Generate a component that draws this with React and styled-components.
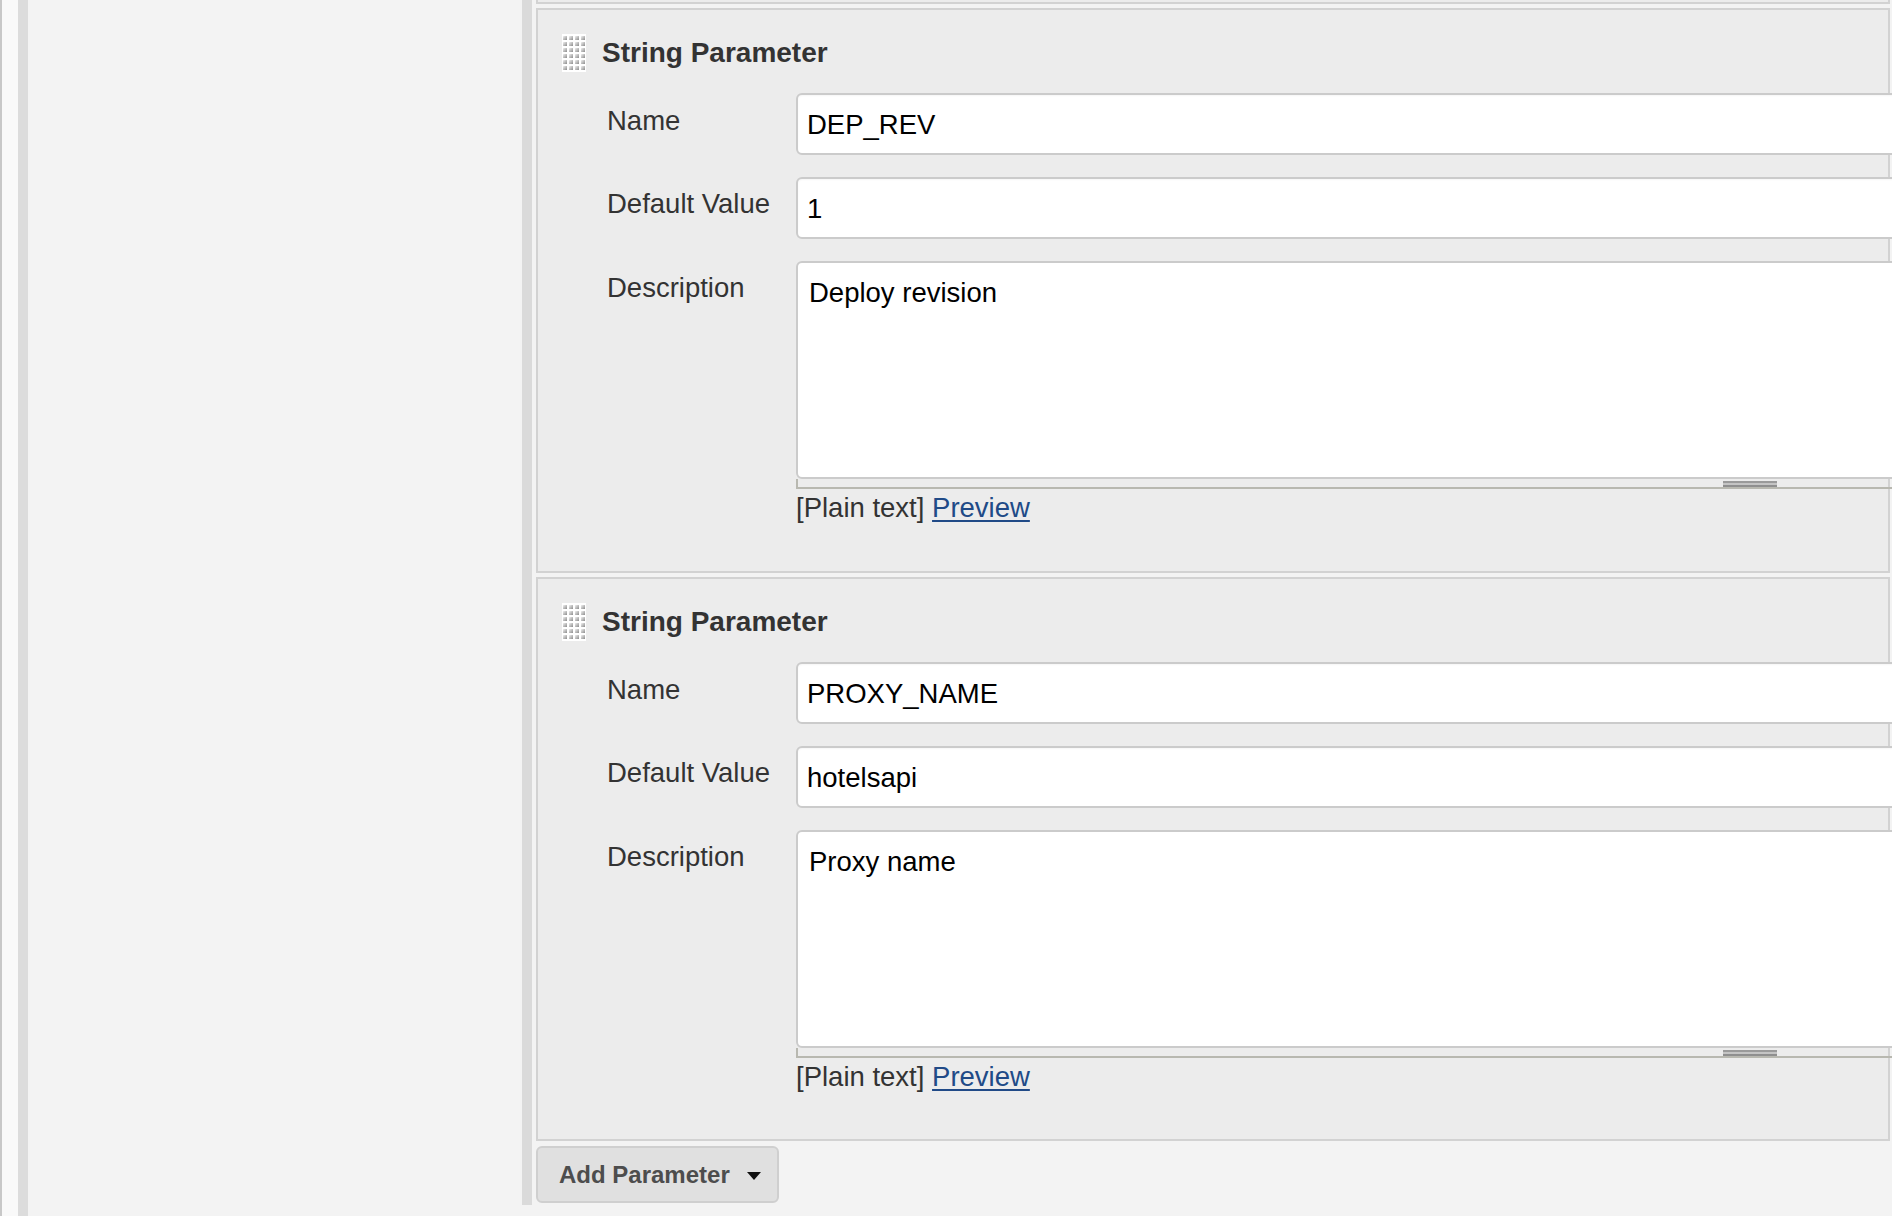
import React from 'react';
import styled, { createGlobalStyle } from 'styled-components';

const GlobalStyle = createGlobalStyle`
  html, body {
    margin: 0;
    padding: 0;
    overflow: hidden;
    background: #f3f3f3;
    font-family: "Liberation Sans", Arial, Helvetica, sans-serif;
  }
  * { box-sizing: border-box; }
`;

const Page = styled.div`
  display: flex;
  width: 1892px;
  height: 1216px;
  overflow: hidden;
`;

const SideStripe = styled.div`
  flex: 0 0 ${p => p.w}px;
  background: ${p => p.bg};
`;

const Rail = styled.div`
  flex: 0 0 10px;
  height: 1205px;
  background: #dadada;
`;

const Content = styled.div`
  flex: 1;
  min-width: 0;
  display: flex;
  flex-direction: column;
  gap: 4px;
  padding: 0 2px 0 4px;
`;

const PrevPanelEnd = styled.div`
  height: 4px;
  background: #ececec;
  border: 2px solid #d2d2d2;
  border-top: none;
`;

const Panel = styled.section`
  background: #ececec;
  border: 2px solid #d2d2d2;
  padding: 24px 0 ${p => p.bottom}px 0;
`;

const Header = styled.div`
  display: flex;
  align-items: center;
  gap: 16px;
  padding-left: 24px;
  margin-bottom: 21px;
`;

const HeaderTitle = styled.div`
  font-size: 28px;
  line-height: 38px;
  font-weight: bold;
  color: #333;
`;

const Fields = styled.div`
  display: flex;
  flex-direction: column;
  gap: 22px;
`;

const Row = styled.div`
  display: grid;
  grid-template-columns: 189px 1906px;
  padding-left: 69px;
`;

const Label = styled.div`
  font-size: 27.5px;
  line-height: 32px;
  padding-top: ${p => p.top}px;
  color: #333;
`;

const TextInput = styled.input`
  display: block;
  width: 100%;
  height: 62px;
  border: 2px solid #cbcbcb;
  border-radius: 6px;
  background: #fff;
  padding: 1px 9px 0;
  font-family: "Liberation Sans", Arial, sans-serif;
  font-size: 27.5px;
  color: #000;
  outline: none;
  box-shadow: inset 0 1px 2px rgba(0, 0, 0, 0.04);
`;

const TextArea = styled.textarea`
  display: block;
  width: 100%;
  height: 218px;
  border: 2px solid #cbcbcb;
  border-radius: 6px;
  background: #fff;
  padding: 14px 11px;
  font-family: "Liberation Sans", Arial, sans-serif;
  font-size: 27.5px;
  color: #000;
  resize: none;
  outline: none;
`;

const ResizeHandle = styled.div`
  height: 10px;
  border-left: 2px solid #b8b8b0;
  border-bottom: 2px solid #b8b8b0;
  display: flex;
  justify-content: center;
  padding-top: 2px;
`;

const Grip = styled.div`
  width: 54px;
  height: 6px;
  border-top: 2px solid #9a9a9a;
  border-bottom: 2px solid #8f8f8f;
  background: #c4c4c4;
`;

const FormatLine = styled.div`
  margin-top: 3px;
  font-size: 27.5px;
  line-height: 32px;
  color: #333;
`;

const PreviewLink = styled.a`
  color: #204a87;
  text-decoration: underline;
  text-underline-offset: 3px;
  cursor: pointer;
`;

const AddButton = styled.button`
  align-self: flex-start;
  display: flex;
  align-items: center;
  gap: 17px;
  height: 57px;
  margin-top: 1px;
  padding: 0 16px 0 21px;
  background: #e0e0e0;
  border: 2px solid #cfcfcf;
  border-radius: 6px;
  font-family: "Liberation Sans", Arial, sans-serif;
  font-size: 24px;
  font-weight: bold;
  color: #4d4d4d;
  cursor: pointer;
`;

const Caret = styled.span`
  width: 0;
  height: 0;
  margin-top: 2px;
  border-left: 7px solid transparent;
  border-right: 7px solid transparent;
  border-top: 8px solid #111;
`;

const DragGrip = () => (
  <svg width="24" height="38" viewBox="0 0 24 38">
    <defs>
      <linearGradient id="dot" x1="0" y1="0" x2="1" y2="1">
        <stop offset="0" stopColor="#f2f2f2" />
        <stop offset="1" stopColor="#8c8c8c" />
      </linearGradient>
    </defs>
    <rect width="24" height="38" fill="#fff" />
    {Array.from({ length: 6 }).map((_, r) =>
      Array.from({ length: 4 }).map((__, c) => (
        <rect key={`${r}-${c}`} x={1 + c * 6} y={2 + r * 6} width="4" height="4" fill="url(#dot)" />
      ))
    )}
  </svg>
);

const StringParameter = ({ name, value, description, bottom }) => (
  <Panel bottom={bottom}>
    <Header>
      <DragGrip />
      <HeaderTitle>String Parameter</HeaderTitle>
    </Header>
    <Fields>
      <Row>
        <Label top={12}>Name</Label>
        <TextInput readOnly value={name} />
      </Row>
      <Row>
        <Label top={11}>Default Value</Label>
        <TextInput readOnly value={value} />
      </Row>
      <Row>
        <Label top={11}>Description</Label>
        <div>
          <TextArea readOnly value={description} />
          <ResizeHandle><Grip /></ResizeHandle>
          <FormatLine>
            [Plain text] <PreviewLink>Preview</PreviewLink>
          </FormatLine>
        </div>
      </Row>
    </Fields>
  </Panel>
);

const App = () => (
  <>
    <GlobalStyle />
    <Page>
      <SideStripe w={2} bg="#c8c8c8" />
      <SideStripe w={16} bg="#f9f9f9" />
      <SideStripe w={10} bg="#dcdcdc" />
      <SideStripe w={494} bg="#f3f3f3" />
      <Rail />
      <Content>
        <PrevPanelEnd />
        <StringParameter name="DEP_REV" value="1" description="Deploy revision" bottom={47} />
        <StringParameter name="PROXY_NAME" value="hotelsapi" description="Proxy name" bottom={46} />
        <AddButton>
          Add Parameter
          <Caret />
        </AddButton>
      </Content>
    </Page>
  </>
);

export default App;
